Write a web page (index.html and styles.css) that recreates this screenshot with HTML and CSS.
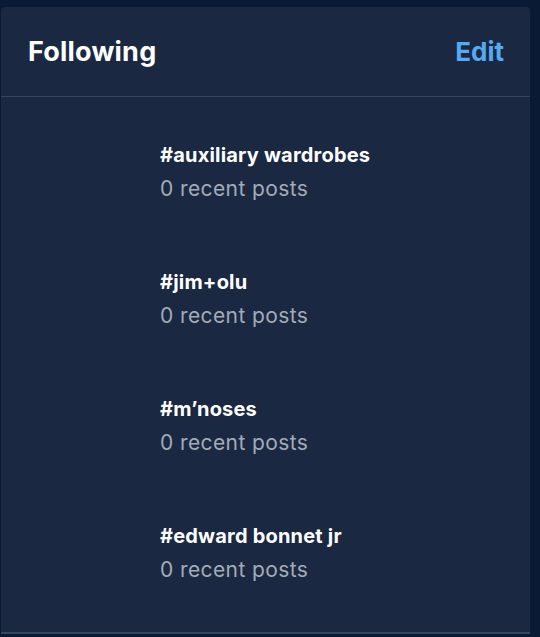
FILE: index.html
```html
<!DOCTYPE html>
<html lang="en">

<head>
    <meta charset="UTF-8">
    <meta name="viewport" content="width=device-width, initial-scale=1.0">
    <title>Following</title>
    <link rel="stylesheet" href="styles.css">
</head>

<body>
    <section class="panel">
        <header class="panel-head">
            <h2>Following</h2>
            <a href="#" class="edit">Edit</a>
        </header>
        <ul class="tags">
            <li class="tag">
                <div class="tag-name">#auxiliary wardrobes</div>
                <div class="tag-count">0 recent posts</div>
            </li>
            <li class="tag">
                <div class="tag-name">#jim+olu</div>
                <div class="tag-count">0 recent posts</div>
            </li>
            <li class="tag">
                <div class="tag-name">#m’noses</div>
                <div class="tag-count">0 recent posts</div>
            </li>
            <li class="tag">
                <div class="tag-name">#edward bonnet jr</div>
                <div class="tag-count">0 recent posts</div>
            </li>
        </ul>
    </section>
</body>

</html>
```

FILE: styles.css
```css
* {
    box-sizing: border-box;
}

body {
    margin: 0;
    padding: 0;
    background: #0b1a34;
    font-family: Inter, "Noto Sans", sans-serif;
}

.panel {
    margin: 7px 0 0 1px;
    width: 529px;
    background: #1a2842;
    border-radius: 4px 4px 0 0;
    border-bottom: 2px solid #36455b;
}

.panel-head {
    display: flex;
    justify-content: space-between;
    align-items: center;
    height: 90px;
    padding: 0 26px 0 27px;
    border-bottom: 1px solid #36455b;
}

.panel-head h2 {
    margin: 0;
    color: #fff;
    font-size: 27px;
    font-weight: 700;
    letter-spacing: 0.2px;
}

.edit {
    color: #55aaf0;
    font-size: 26px;
    font-weight: 700;
    text-decoration: none;
}

.tags {
    list-style: none;
    margin: 0;
    padding: 46px 0 50px 0;
    display: flex;
    flex-direction: column;
    gap: 69px;
}

.tag {
    padding-left: 159px;
}

.tag-name {
    color: #fff;
    font-size: 20px;
    font-weight: 700;
    line-height: 24px;
    letter-spacing: 0.2px;
}

.tag-count {
    margin-top: 10px;
    color: #a3abb8;
    font-size: 21px;
    line-height: 24px;
    letter-spacing: 0.4px;
}
```
